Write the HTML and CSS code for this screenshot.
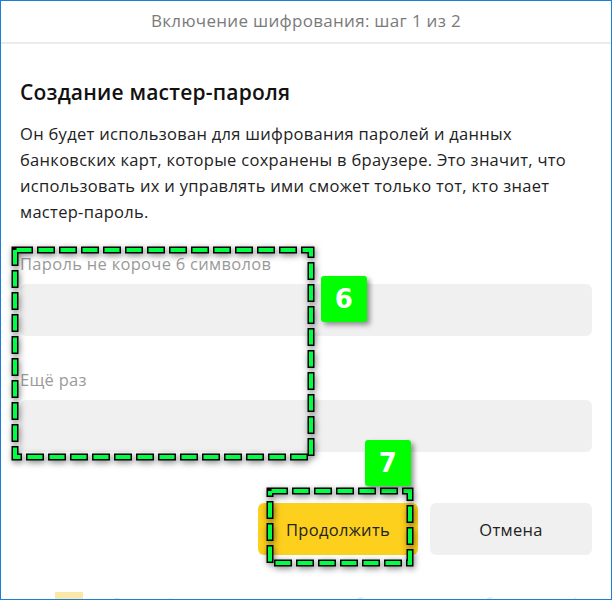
FILE: index.html
```html
<!DOCTYPE html>
<html lang="ru">
<head>
  <meta charset="UTF-8" />
  <title>Мастер-пароль</title>
  <link rel="stylesheet" href="styles.css">
</head>
<body>
  <div class="window">
    <div class="header">Включение шифрования: шаг 1 из 2</div>

    <div class="content">
      <h2 class="title">Создание мастер-пароля</h2>
      <p class="desc">Он будет использован для шифрования паролей и данных банковских карт, которые сохранены в браузере. Это значит, что использовать их и управлять ими сможет только тот, кто знает мастер-пароль.</p>

      <label class="field-label" for="pass1">Пароль не короче 6 символов</label>
      <input class="field" id="pass1" type="password" />

      <label class="field-label second" for="pass2">Ещё раз</label>
      <input class="field" id="pass2" type="password" />

      <div class="actions">
        <button class="btn btn-primary">Продолжить</button>
        <button class="btn btn-cancel">Отмена</button>
      </div>
    </div>

    <div class="behind"><span class="mark"></span>Сохранённые пароли и данные банковских карт будут зашифрованы</div>

    <!-- callouts -->
    <svg class="frame frame-fields" width="310" height="220">
      <rect class="dash-back" x="6" y="6" width="296" height="207" />
      <rect class="dash-front" x="6" y="6" width="296" height="207" />
    </svg>
    <div class="badge badge-6">6</div>

    <svg class="frame frame-next" width="156" height="88">
      <rect class="dash-back" x="6" y="6" width="140" height="72" />
      <rect class="dash-front" x="6" y="6" width="140" height="72" />
    </svg>
    <div class="badge badge-7">7</div>
  </div>
</body>
</html>
```

FILE: styles.css
```css
* {
  box-sizing: border-box;
}

body {
  margin: 0;
  font-family: "Open Sans", "Noto Sans", sans-serif;
  letter-spacing: 0.3px;
  background: #fff;
}

.window {
  position: relative;
  width: 612px;
  height: 600px;
  border: 1px solid #1c7ed6;
  overflow: hidden;
  background: #fff;
}

.header {
  height: 43px;
  line-height: 40px;
  text-align: center;
  font-size: 17px;
  color: #7a7a7a;
  border-bottom: 2px solid #ebebeb;
}

.content {
  padding: 0 19px;
}

.title {
  margin: 34px 0 0;
  font-size: 21px;
  line-height: 28px;
  font-weight: 600;
  letter-spacing: 0.2px;
  color: #111;
}

.desc {
  margin: 15px 0 0;
  font-size: 16.5px;
  line-height: 26px;
  color: #222;
}

.field-label {
  display: block;
  margin-top: 29px;
  font-size: 16.5px;
  line-height: 20px;
  color: #9a9a9a;
}

.field-label.second {
  margin-top: 34px;
}

.field {
  display: block;
  width: 100%;
  height: 52px;
  margin-top: 10px;
  border: none;
  border-radius: 6px;
  background: #f0f0f0;
  outline: none;
}

.actions {
  display: flex;
  justify-content: flex-end;
  gap: 12px;
  margin-top: 51px;
}

.btn {
  height: 52px;
  border: none;
  border-radius: 6px;
  font-family: inherit;
  font-size: 16.5px;
  letter-spacing: 0.3px;
  color: #222;
  cursor: pointer;
}

.btn-primary {
  width: 160px;
  background: #fdd01d;
}

.btn-cancel {
  width: 162px;
  background: #f0f0f0;
}

/* page under the dialog, barely showing at the bottom edge */
.behind {
  position: absolute;
  left: 2px;
  right: 2px;
  bottom: -13px;
  font-size: 15px;
  line-height: 20px;
  color: #e2e2e2;
  white-space: nowrap;
  overflow: hidden;
}

.behind .mark {
  display: inline-block;
  width: 28px;
  height: 20px;
  margin: 0 28px 0 52px;
  vertical-align: top;
  background: #fbe7a8;
}

/* dashed callout frames */
.frame {
  position: absolute;
  filter: drop-shadow(1px 2px 3px rgba(0, 0, 0, 0.5));
}

.frame rect {
  fill: none;
}

.dash-back {
  stroke: #000;
  stroke-width: 7;
  stroke-dasharray: 18 4;
}

.dash-front {
  stroke: #00ff44;
  stroke-width: 4;
  stroke-dasharray: 15 7;
  stroke-dashoffset: -1.5;
}

.frame-fields {
  left: 8px;
  top: 243px;
}

.frame-next {
  left: 263px;
  top: 484px;
}

.badge {
  position: absolute;
  width: 46px;
  height: 46px;
  border-radius: 3px;
  background: #00ff00;
  color: #fff;
  font-family: "DejaVu Sans", sans-serif;
  font-weight: bold;
  font-size: 26px;
  line-height: 46px;
  text-align: center;
  box-shadow: 3px 3px 5px rgba(0, 0, 0, 0.4);
}

.badge-6 {
  left: 320px;
  top: 275px;
}

.badge-7 {
  left: 364px;
  top: 439px;
}
```
